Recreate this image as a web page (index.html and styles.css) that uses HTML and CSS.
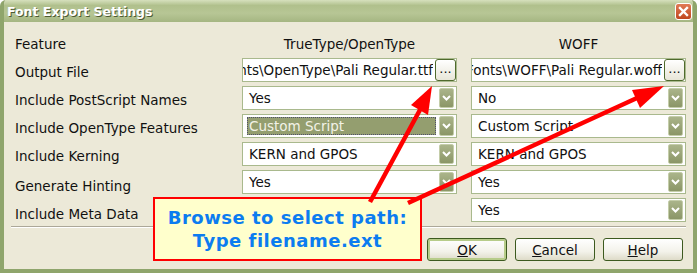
FILE: index.html
```html
<!DOCTYPE html>
<html lang="en">
<head>
  <meta charset="UTF-8" />
  <title>Font Export Settings</title>
  <link rel="stylesheet" href="styles.css">
</head>
<body>
  <div class="window">
    <div class="titlebar">
      <span class="title">Font Export Settings</span>
      <span class="close">
        <svg width="11" height="11" viewBox="0 0 11 11"><path d="M2 2 L9 9 M9 2 L2 9" stroke="#fff" stroke-width="2.4" stroke-linecap="square"/></svg>
      </span>
    </div>

    <div class="content">
      <div class="grid">
        <div class="label">Feature</div>
        <div class="colhead">TrueType/OpenType</div>
        <div class="colhead">WOFF</div>

        <div class="label">Output File</div>
        <div class="field path">
          <div class="path-text"><span>C:\Fonts\OpenType\Pali Regular.ttf</span></div>
          <button class="browse">...</button>
        </div>
        <div class="field path">
          <div class="path-text"><span>C:\Fonts\WOFF\Pali Regular.woff</span></div>
          <button class="browse">...</button>
        </div>

        <div class="label">Include PostScript Names</div>
        <div class="field select"><span class="value">Yes</span><span class="drop"></span></div>
        <div class="field select"><span class="value">No</span><span class="drop"></span></div>

        <div class="label">Include OpenType Features</div>
        <div class="field select focused"><span class="value">Custom Script</span><span class="drop"></span></div>
        <div class="field select"><span class="value">Custom Script</span><span class="drop"></span></div>

        <div class="label">Include Kerning</div>
        <div class="field select"><span class="value">KERN and GPOS</span><span class="drop"></span></div>
        <div class="field select"><span class="value">KERN and GPOS</span><span class="drop"></span></div>

        <div class="label low">Generate Hinting</div>
        <div class="field select"><span class="value">Yes</span><span class="drop"></span></div>
        <div class="field select"><span class="value">Yes</span><span class="drop"></span></div>

        <div class="label low">Include Meta Data</div>
        <div></div>
        <div class="field select"><span class="value">Yes</span><span class="drop"></span></div>
      </div>

      <div class="sep"></div>

      <div class="buttons">
        <button class="btn default"><u>O</u>K</button>
        <button class="btn"><u>C</u>ancel</button>
        <button class="btn"><u>H</u>elp</button>
      </div>
    </div>

    <!-- annotation over the dialog -->
    <div class="callout">
      Browse to select path:<br>Type filename.ext
    </div>
    <svg class="arrows" width="697" height="273" viewBox="0 0 697 273">
      <line x1="370" y1="202" x2="421" y2="108" stroke="#f00" stroke-width="4.5"/>
      <polygon points="432,86 428,115 411,105" fill="#f00"/>
      <line x1="408" y1="203" x2="637" y2="98" stroke="#f00" stroke-width="4.5"/>
      <polygon points="664,86 640,108 632,90" fill="#f00"/>
    </svg>
  </div>

  <script>
    // the drop buttons all share one chevron
    document.querySelectorAll('.drop').forEach(d => {
      d.innerHTML = '<svg width="9" height="6" viewBox="0 0 9 6"><path d="M1 1 L4.5 4.5 L8 1" fill="none" stroke="#fff" stroke-width="2"/></svg>';
    });
  </script>
</body>
</html>
```

FILE: styles.css
```css
body {
  margin: 0;
  padding: 0;
  background: #fff;
  font-family: "DejaVu Sans", Verdana, sans-serif;
  font-size: 13.5px;
  color: #111;
}
.window {
  position: relative;
  width: 697px;
  height: 273px;
  box-sizing: border-box;
  background: #ece9d8;
  border: 4px solid #8fa56c;
  border-top: none;
  border-radius: 6px 6px 0 0;
  overflow: hidden;
}
.titlebar {
  height: 22px;
  margin: 0 -4px;
  background: linear-gradient(#d6e0bd 0%, #b0c08c 25%, #b7c695 60%, #a5b682 100%);
  display: flex;
  align-items: center;
  justify-content: space-between;
  padding: 0 5px 0 7px;
}
.title {
  color: #fff;
  font-weight: bold;
  font-size: 12.5px;
  text-shadow: 1px 1px 0 #4d5a33;
}
.close {
  width: 15px;
  height: 15px;
  border: 1px solid #fff;
  border-radius: 3px;
  background: linear-gradient(#e07a55, #c0471f);
  display: flex;
  align-items: center;
  justify-content: center;
}
.content {
  padding: 8px 7px 0 7px;
}
.grid {
  display: grid;
  grid-template-columns: 217px 215px 215px;
  grid-auto-rows: 24px;
  column-gap: 14px;
  row-gap: 4px;
}
.label {
  padding-left: 4px;
  display: flex;
  align-items: center;
  padding-top: 4px;
  white-space: nowrap;
}
.label.low {
  padding-top: 8px;
}
.colhead {
  text-align: center;
  padding-top: 6px;
}
.field {
  box-sizing: border-box;
  border: 1px solid #a9b98d;
  background: #fff;
  display: flex;
  align-items: center;
  min-width: 0;
}
.path-text {
  flex: 1;
  min-width: 0;
  overflow: hidden;
  display: flex;
  justify-content: flex-end;
  white-space: nowrap;
}
.browse {
  flex: none;
  width: 21px;
  height: 22px;
  margin-left: 2px;
  padding: 0 0 4px 0;
  border: 1px solid #4f6a2c;
  border-radius: 3px;
  background: linear-gradient(#ffffff, #e8e6d8);
  font-family: "DejaVu Sans", sans-serif;
  font-size: 13px;
  color: #111;
  line-height: 1;
}
.select {
  padding: 2px 2px 2px 4px;
}
.select .value {
  flex: 1;
  align-self: stretch;
  display: flex;
  align-items: center;
  padding-left: 2px;
}
.focused .value {
  background: #949e6f;
  color: #f2f2e6;
  outline: 1px dotted #50506a;
  outline-offset: -1px;
}
.drop {
  width: 15px;
  height: 20px;
  margin-left: 3px;
  box-sizing: border-box;
  border: 1px solid #c4cda9;
  border-radius: 2px;
  background: linear-gradient(#aab48a, #8b9667);
  display: flex;
  align-items: center;
  justify-content: center;
}
.sep {
  margin-top: 4px;
  border-top: 1px solid #aca899;
  border-bottom: 1px solid #fff;
}
.buttons {
  display: flex;
  justify-content: flex-end;
  gap: 8px;
  padding: 10px 3px 0 0;
}
.btn {
  width: 80px;
  height: 23px;
  box-sizing: border-box;
  border: 1px solid #3d5a1f;
  border-radius: 3px;
  background: linear-gradient(#ffffff, #f3f2ea 60%, #dedbc8);
  font-family: "DejaVu Sans", sans-serif;
  font-size: 13.5px;
  color: #111;
  padding: 0;
}
.btn.default {
  box-shadow: inset 0 0 0 2px #b7cc8a;
}
.callout {
  position: absolute;
  left: 149px;
  top: 197px;
  width: 269px;
  height: 64px;
  box-sizing: border-box;
  border: 2px solid #f00;
  background: #ffffcc;
  color: #0c7cf0;
  font-weight: bold;
  font-size: 18px;
  letter-spacing: 0.5px;
  line-height: 23px;
  text-align: center;
  padding-top: 7px;
}
.arrows {
  position: absolute;
  left: -4px;
  top: 0;
  pointer-events: none;
}
```
